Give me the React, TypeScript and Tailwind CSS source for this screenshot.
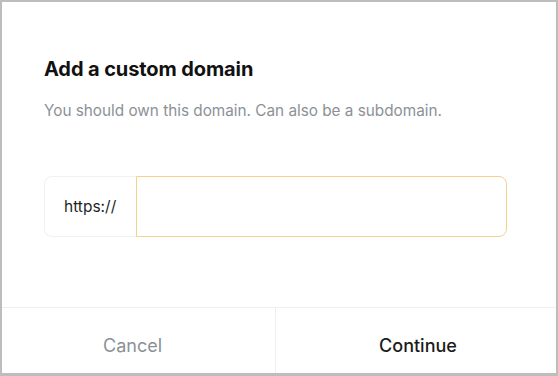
import React from 'react';

export default function App() {
  return (
    <div
      className="w-[558px] h-[376px] bg-[#bdbdbd] pt-[2px] pl-[2px] pr-[2px] pb-[3px]"
      style={{ fontFamily: 'Inter, "Liberation Sans", sans-serif' }}
    >
      <div className="h-full w-full bg-white flex flex-col">
        {/* Body */}
        <div className="flex-1 px-[42px] pt-[54px]">
          <h1 className="text-[20px] leading-[26px] font-bold text-[#111111] tracking-[-0.1px]">
            Add a custom domain
          </h1>
          <p className="mt-[19px] text-[15.3px] leading-[20px] text-[#8b9197]">
            You should own this domain. Can also be a subdomain.
          </p>

          <div className="mt-[55px] flex h-[61px] w-[463px]">
            <div className="w-[92px] flex items-center pl-[19px] border border-r-0 border-[#f1f1f1] rounded-l-[8px] text-[15.5px] text-[#1f1f1f]">
              https://
            </div>
            <input
              className="flex-1 border border-[#f3d28e] rounded-r-[8px] outline-none px-3 text-[14px]"
              type="text"
            />
          </div>
        </div>

        {/* Footer */}
        <div className="h-[66px] flex border-t border-[#eeeeee]">
          <button className="w-[274px] flex items-start justify-center pt-[27px] pr-[12px] text-[18px] leading-[22px] text-[#8b9197] border-r border-[#eeeeee]">
            Cancel
          </button>
          <button className="flex-1 flex items-start justify-center pt-[27px] pl-[4px] text-[18px] leading-[22px] font-medium text-[#1b1b1b]">
            Continue
          </button>
        </div>
      </div>
    </div>
  );
}
